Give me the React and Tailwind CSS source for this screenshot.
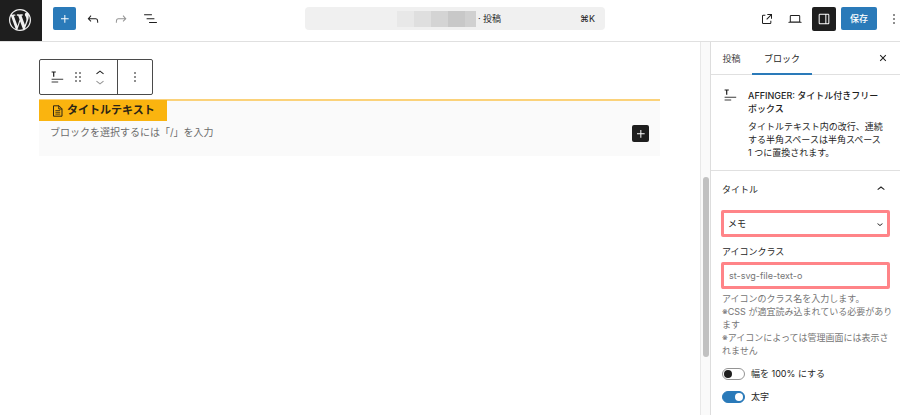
import React, { useState } from "react";

const FONT = "font-['Inter','Noto_Sans_CJK_JP',sans-serif]";

function WordPressLogo() {
  return (
    <svg viewBox="0 0 20 20" className="size-[22px] fill-[#f0f0f0]" aria-hidden="true">
      <path d="M20 10c0-5.51-4.49-10-10-10C4.48 0 0 4.49 0 10c0 5.52 4.48 10 10 10 5.51 0 10-4.48 10-10zM7.78 15.37L4.37 6.22c.55-.02 1.17-.08 1.17-.08.5-.06.44-1.13-.06-1.11 0 0-1.45.11-2.37.11-.18 0-.37 0-.58-.01C4.12 2.69 6.87 1.11 10 1.11c2.33 0 4.45.87 6.05 2.34-.68-.11-1.65.39-1.65 1.58 0 .74.45 1.36.9 2.1.35.61.55 1.36.55 2.46 0 1.49-1.4 5-1.4 5l-3.03-8.37c.54-.02.82-.17.82-.17.5-.05.44-1.25-.06-1.22 0 0-1.44.12-2.38.12-.87 0-2.33-.12-2.33-.12-.5-.03-.56 1.2-.06 1.22l.92.08 1.26 3.41zM17.41 10c.24-.64.74-1.87.43-4.25.7 1.29 1.05 2.71 1.05 4.25 0 3.29-1.73 6.24-4.4 7.78.97-2.59 1.94-5.2 2.92-7.78zM6.1 18.09C3.12 16.65 1.11 13.53 1.11 10c0-1.3.23-2.48.72-3.59C3.25 10.3 4.67 14.2 6.1 18.09zm4.03-6.63l2.58 6.98c-.86.29-1.76.45-2.71.45-.79 0-1.57-.11-2.29-.33.81-2.38 1.62-4.74 2.42-7.1z" />
    </svg>
  );
}

function Icon({ d, className = "size-4", box = "0 0 24 24" }) {
  return (
    <svg viewBox={box} className={`shrink-0 fill-current ${className}`} aria-hidden="true">
      <path d={d} />
    </svg>
  );
}

const PLUS = "M11 12.5V17.5H12.5V12.5H17.5V11H12.5V6H11V11H6V12.5H11Z";
const UNDO =
  "M18.3 11.7c-.6-.6-1.4-.9-2.3-.9H6.7l2.9-3.3-1.1-1-4.5 5L8.5 16l1-1-2.7-2.7H16c.5 0 .9.2 1.3.5 1 1 1 3.4 1 4.5v.3h1.5v-.2c0-1.5 0-4.3-1.5-5.7z";
const REDO =
  "M15.6 6.5l-1.1 1 2.9 3.3H8c-.9 0-1.7.3-2.3.9-1.4 1.5-1.4 4.2-1.4 5.6v.2h1.5v-.3c0-1.1 0-3.5 1-4.5.3-.3.7-.5 1.3-.5h9.2L14.5 15l1.1 1.1 4.6-4.6-4.6-5z";
const LIST = "M3 6h11v1.5H3V6Zm3.5 5.5h11V13h-11v-1.5ZM21 17H10v1.5h11V17Z";
const EXTERNAL =
  "M19.5 4.5h-7V6h4.44l-5.97 5.97 1.06 1.06L18 7.06v4.44h1.5v-7Zm-13 1a2 2 0 0 0-2 2v10a2 2 0 0 0 2 2h10a2 2 0 0 0 2-2v-3H17v3a.5.5 0 0 1-.5.5h-10a.5.5 0 0 1-.5-.5v-10a.5.5 0 0 1 .5-.5h3V5.5h-3Z";
const DESKTOP =
  "M20.5 16h-.7V8c0-1.1-.9-2-2-2H6.2c-1.1 0-2 .9-2 2v8h-.7c-.8 0-1.5.7-1.5 1.5h20c0-.8-.7-1.5-1.5-1.5zM5.7 8c0-.3.2-.5.5-.5h11.6c.3 0 .5.2.5.5v7.6H5.7V8z";
const DRAWER =
  "M18 4H6c-1.1 0-2 .9-2 2v12c0 1.1.9 2 2 2h12c1.1 0 2-.9 2-2V6c0-1.1-.9-2-2-2zm-4 14.5H6c-.3 0-.5-.2-.5-.5V6c0-.3.2-.5.5-.5h8v13zm4.5-.5c0 .3-.2.5-.5.5h-2.5v-13H18c.3 0 .5.2.5.5v12z";
const MORE = "M13 19h-2v-2h2v2zm0-6h-2v-2h2v2zm0-6h-2V5h2v2z";
const DRAG =
  "M8 7h2V5H8v2zm0 6h2v-2H8v2zm0 6h2v-2H8v2zm6-14v2h2V5h-2zm0 8h2v-2h-2v2zm0 6h2v-2h-2v2z";
const UP = "M6.5 12.4L12 8l5.5 4.4-.9 1.2L12 10l-4.5 3.6-1-1.2z";
const DOWN = "M17.5 11.6L12 16l-5.5-4.4.9-1.2L12 14l4.5-3.6 1 1.2z";
const CLOSE =
  "M12 13.06l3.71 3.71 1.06-1.06L13.06 12l3.71-3.71-1.06-1.06L12 10.94 8.29 7.23 7.23 8.29 10.94 12l-3.71 3.71 1.06 1.06L12 13.06z";

function TitleBoxIcon() {
  return (
    <svg viewBox="0 0 14 12" className="h-3 w-[14px] shrink-0" fill="none" stroke="#1e1e1e" aria-hidden="true">
      <path d="M1.6 1h4.2M3.7 1v4.8" strokeWidth="1.2" />
      <path d="M1.6 8.3h11.6M1.6 11h6.6" strokeWidth="1.1" stroke="#3c3c3c" />
    </svg>
  );
}

function FileIcon() {
  return (
    <svg viewBox="0 0 12 12" className="size-3 shrink-0" fill="none" stroke="#2b2416" aria-hidden="true">
      <path d="M1.5.8h5.5l3 3v7.4H1.5zM6.8.8v3.2h3.2" />
      <path d="M3.4 5.6h4.8M3.4 7.3h4.8M3.4 9.1h4.8" strokeWidth=".8" />
    </svg>
  );
}

function TopBar() {
  return (
    <header className="flex h-[42px] shrink-0 items-stretch border-b border-[#e0e0e0]">
      <a href="#dashboard" aria-label="WordPress" className="flex w-[42px] items-center justify-center bg-[#1e1e1e] pr-[2px] pb-[2px]">
        <WordPressLogo />
      </a>
      <div className="flex flex-1 items-center pb-1">
        <div className="flex w-[263px] items-center pl-[11px]">
          <button aria-label="追加" className="flex size-[23px] items-center justify-center rounded-xs bg-[#2a7ab9] text-white">
            <Icon d={PLUS} />
          </button>
          <button aria-label="元に戻す" className="ml-[9px] text-[#1e1e1e]">
            <Icon d={UNDO} />
          </button>
          <button aria-label="やり直す" className="ml-3 text-[#949494]">
            <Icon d={REDO} />
          </button>
          <button aria-label="ドキュメント概観" className="ml-[13px] text-[#1e1e1e]">
            <Icon d={LIST} className="size-[17px]" />
          </button>
        </div>
        <button className="flex h-[23px] w-[300px] items-center rounded-sm bg-[#f0f0f0] pr-[10px] text-[9px] text-[#1e1e1e]">
          <span className="ml-[92px] flex h-4">
            <span className="w-[17px] bg-[#e8e8e8]" />
            <span className="w-[17px] bg-[#dfdfdf]" />
            <span className="w-[17px] bg-[#d4d4d4]" />
            <span className="w-[17px] bg-[#c8c8c8]" />
            <span className="w-[11px] bg-[#d0d0d0]" />
          </span>
          <span className="ml-[2px]">· 投稿</span>
          <span className="ml-auto">⌘K</span>
        </button>
        <div className="ml-auto flex items-center text-[#1e1e1e]">
          <button aria-label="投稿を表示" className="mr-[12px]">
            <Icon d={EXTERNAL} />
          </button>
          <button aria-label="表示" className="mr-[9px]">
            <Icon d={DESKTOP} />
          </button>
          <button aria-label="設定" className="mr-[5px] flex size-6 items-center justify-center rounded-xs bg-[#1e1e1e] text-white">
            <Icon d={DRAWER} />
          </button>
          <button className="h-[23px] w-9 rounded-xs bg-[#2a7ab9] text-[9px] font-medium text-white">保存</button>
          <button aria-label="オプション" className="-mr-[2px] ml-[9px]">
            <Icon d={MORE} />
          </button>
        </div>
      </div>
    </header>
  );
}

function BlockToolbar() {
  return (
    <div role="toolbar" className="flex h-9 w-fit rounded-xs border border-[#4a4a4a] bg-white text-[#1e1e1e]">
      <div className="flex w-[78px] items-center border-r border-[#4a4a4a] pl-[10px]">
        <button aria-label="タイトル付きフリーボックス">
          <TitleBoxIcon />
        </button>
        <button aria-label="ドラッグ" className="ml-[6px]">
          <Icon d={DRAG} />
        </button>
        <div className="ml-[8px] flex flex-col">
          <button aria-label="上に移動">
            <Icon d={UP} box="4 6 16 10" className="h-[7px] w-3" />
          </button>
          <button aria-label="下に移動" className="mt-[3px] text-[#949494]">
            <Icon d={DOWN} box="4 8 16 10" className="h-[7px] w-3" />
          </button>
        </div>
      </div>
      <button aria-label="オプション" className="flex w-[34px] items-center justify-center">
        <Icon d={MORE} />
      </button>
    </div>
  );
}

function Canvas() {
  return (
    <main className="min-w-0 flex-1 pr-10 pl-[39px] pt-[17px]">
      <BlockToolbar />
      <section className="mt-[4px] h-[57px] border-t-2 border-[#fbd27a] bg-[#fafafa] text-[10px]">
        <h2 className="-mt-px flex h-[21px] w-32 items-center gap-[3px] bg-[#fab40f] pl-[13px] text-[11px] font-bold text-[#2b2416]">
          <FileIcon />
          <span className="whitespace-nowrap">タイトルテキスト</span>
        </h2>
        <div className="flex items-center justify-between pt-px pr-[11px] pl-[11px]">
          <p className="text-[#6c6c6c]">ブロックを選択するには「/」を入力</p>
          <button aria-label="ブロックを追加" className="mt-[3px] flex size-[17px] items-center justify-center rounded-xs bg-[#1e1e1e] text-white">
            <Icon d={PLUS} />
          </button>
        </div>
      </section>
    </main>
  );
}

function Toggle({ label, defaultChecked }) {
  const [on, setOn] = useState(defaultChecked);
  return (
    <label className="flex h-[23px] items-center gap-[6px] text-[9px] text-[#1e1e1e]">
      <input type="checkbox" role="switch" checked={on} onChange={() => setOn(!on)} className="peer sr-only" />
      <span className="flex h-3 w-[23px] items-center rounded-full border border-[#949494] bg-white px-px peer-checked:justify-end peer-checked:border-[#2a7ab9] peer-checked:bg-[#2a7ab9]">
        <span className={on ? "size-2 rounded-full bg-white" : "size-2 rounded-full bg-[#1e1e1e]"} />
      </span>
      {label}
    </label>
  );
}

function Sidebar() {
  return (
    <aside className="w-[190px] shrink-0 border-l border-[#ddd] text-[9px] leading-[13px] text-[#1e1e1e]">
      <div className="flex h-[33px] border-b border-[#e0e0e0]">
        <button className="w-[41px] text-[#3c3c3c]">投稿</button>
        <button className="-mb-px w-[60px] border-b-2 border-[#2a7ab9] pt-[2px]">ブロック</button>
        <button aria-label="閉じる" className="mr-[9px] ml-auto">
          <Icon d={CLOSE} />
        </button>
      </div>
      <div className="flex gap-[11px] border-b border-[#e0e0e0] pt-[14px] pr-3 pb-[11px] pl-3">
        <TitleBoxIcon />
        <div>
          <h2 className="-mr-2 font-medium">AFFINGER: タイトル付きフリー<br />ボックス</h2>
          <p className="-mr-2 mt-[5px]">タイトルテキスト内の改行、連続<br />する半角スペースは半角スペース<br />1 つに置換されます。</p>
        </div>
      </div>
      <div className="px-[11px]">
        <button className="flex h-[39px] w-full items-center justify-between pb-[3px]">
          タイトル
          <Icon d={UP} className="size-4" />
        </button>
        <div className="relative -mx-px">
          <select aria-label="タイトルの種類" className="block h-[27px] w-full appearance-none rounded-xs border-[3px] border-[#ff8488] bg-white pl-1">
            <option>メモ</option>
          </select>
          <span className="pointer-events-none absolute inset-y-0 right-1 flex items-center">
            <Icon d={DOWN} className="size-3" />
          </span>
        </div>
        <label htmlFor="icon-class" className="mt-2 block">アイコンクラス</label>
        <div className="-mx-px mt-[4px]">
          <input id="icon-class" type="text" placeholder="st-svg-file-text-o" className="block h-[27px] w-full rounded-xs border-[3px] border-[#ff8488] pl-[5px] placeholder:text-[#757575]" />
        </div>
        <p className="-mr-2 mt-[3px] text-[#757575]">
          アイコンのクラス名を入力します。<br />
          ※CSS が適宜読み込まれている必要があり<br />ます<br />
          ※アイコンによっては管理画面には表示さ<br />れません
        </p>
        <div className="mt-[5px]">
          <Toggle label="幅を 100% にする" defaultChecked={false} />
          <Toggle label="太字" defaultChecked={true} />
        </div>
      </div>
    </aside>
  );
}

export default function App() {
  return (
    <div lang="ja" className={`flex h-screen flex-col overflow-hidden bg-white ${FONT}`}>
      <TopBar />
      <div className="flex min-h-0 flex-1">
        <Canvas />
        <div className="flex w-[10px] shrink-0 justify-center border-l border-[#e8e8e8] bg-[#fafafa] pt-[135px]" aria-hidden="true">
          <div className="h-[180px] w-[6px] rounded-full bg-[#c1c1c1]" />
        </div>
        <Sidebar />
      </div>
    </div>
  );
}
